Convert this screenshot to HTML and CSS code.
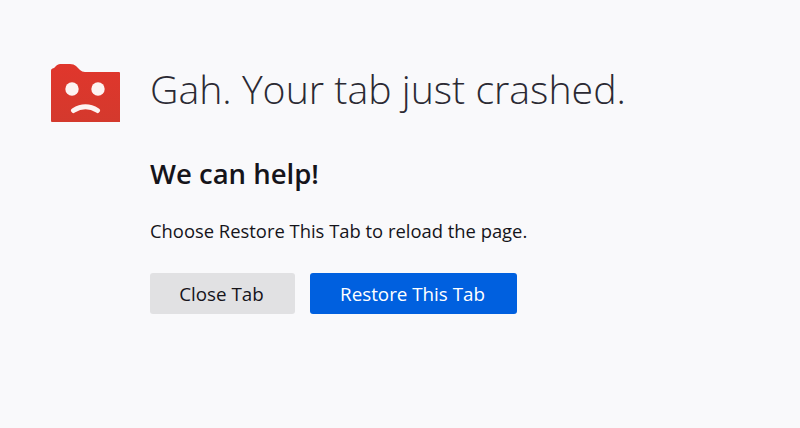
FILE: index.html
```html
<!DOCTYPE html>
<html lang="en">
<head>
    <meta charset="UTF-8">
    <meta name="viewport" content="width=device-width, initial-scale=1.0">
    <title>Tab Crashed</title>
    <link rel="stylesheet" href="styles.css">
</head>
<body>
    <div class="container">
        <svg class="crash-icon" width="70" height="60" viewBox="0 0 70 60">
            <defs>
                <linearGradient id="folderFill" x1="0" y1="0" x2="0" y2="1">
                    <stop offset="0" stop-color="#e0362c"/>
                    <stop offset="1" stop-color="#d4392d"/>
                </linearGradient>
            </defs>
            <path d="M0 6.500 Q0 5 1.500 4.500 L3 4 L5.500 1.500 Q7 0 9 0 L19 0 Q23 0 25 2 L29 6 Q31 8 34 8 L68 8 Q69 8 69 9 L69 58 L1 58 Q0 58 0 57 Z" fill="url(#folderFill)"/>
            <circle cx="21" cy="25" r="6.700" fill="#fdf3f2"/>
            <circle cx="47" cy="25" r="6.700" fill="#fdf3f2"/>
            <path d="M22.500 46.500 Q34.500 39 46.500 46.500" fill="none" stroke="#fdf3f2" stroke-width="5" stroke-linecap="round"/>
        </svg>
        <div class="content">
            <h1>Gah. Your tab just crashed.</h1>
            <h2>We can help!</h2>
            <p>Choose Restore This Tab to reload the page.</p>
            <div class="buttons">
                <button type="button" class="btn btn-close">Close Tab</button>
                <button type="button" class="btn btn-restore">Restore This Tab</button>
            </div>
        </div>
    </div>
</body>
</html>
```

FILE: styles.css
```css
body {
    font-family: "Open Sans", "Noto Sans", sans-serif;
    background-color: #f9f9fb;
    margin: 0;
    color: #15141a;
}
.container {
    display: flex;
    padding: 64px 0 0 51px;
}
.crash-icon {
    flex: none;
    margin-right: 28px;
}
.content {
    display: flex;
    flex-direction: column;
    align-items: flex-start;
    margin-left: 1px;
}
h1 {
    font-weight: 300;
    font-size: 39.25px;
    line-height: 52px;
    color: #2b2a33;
    margin: -1px 0 0;
}
h2 {
    font-size: 27.500px;
    font-weight: 600;
    line-height: 36px;
    margin: 41px 0 0;
}
p {
    font-size: 18.400px;
    line-height: 24px;
    margin: 27px 0 0;
}
.buttons {
    display: flex;
    gap: 15px;
    margin-top: 30px;
}
.btn {
    font-family: "Open Sans", sans-serif;
    font-size: 18.800px;
    height: 41px;
    border: none;
    border-radius: 3px;
    padding: 0 2px 0 0;
    cursor: pointer;
}
.btn-close {
    width: 145px;
    background-color: #e1e1e3;
    color: #15141a;
}
.btn-restore {
    width: 207px;
    background-color: #0060df;
    color: #fff;
}
```
